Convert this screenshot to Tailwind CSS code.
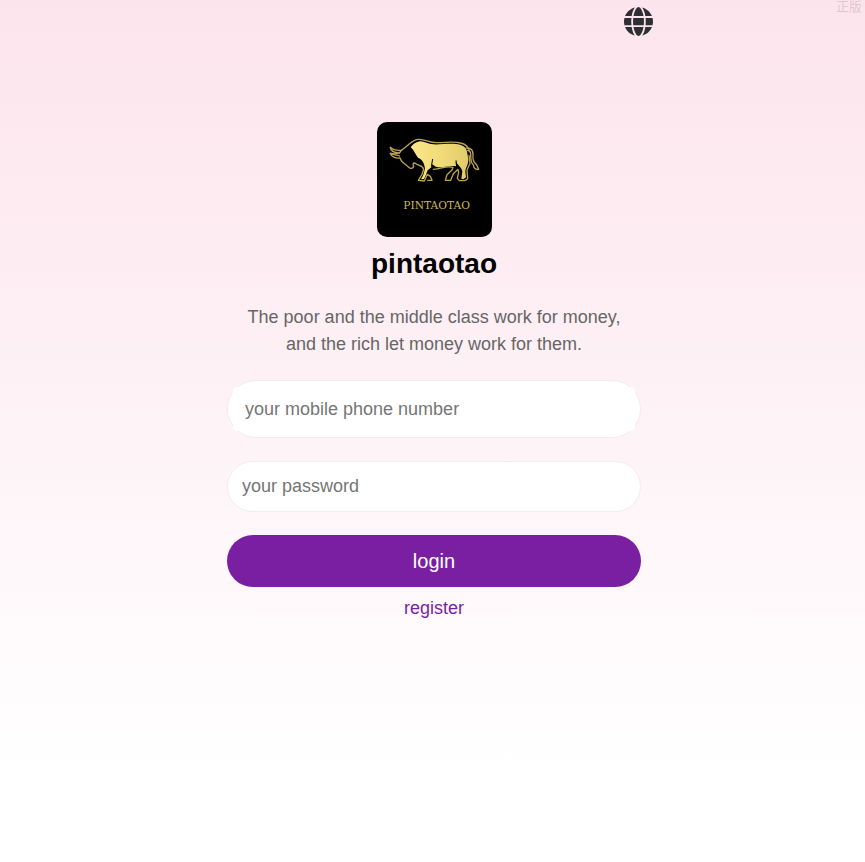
<!DOCTYPE html>
<html lang="en">
<head>
<meta charset="utf-8">
<meta name="viewport" content="width=device-width, initial-scale=1">
<title>pintaotao</title>
<script src="https://cdn.jsdelivr.net/npm/@tailwindcss/browser@4"></script>
</head>
<body class="relative min-h-screen bg-linear-to-b from-[#fce4ec] to-white to-90% font-['Liberation_Sans',Arial,'Noto_Sans_CJK_SC',sans-serif] text-lg text-[#666]">
<span class="absolute top-0 right-[3px] -mt-0.5 text-[13px] leading-[18px] text-black/15" lang="zh">正版</span>
<main class="mx-auto max-w-[461px]">
  <header class="flex justify-end pt-[7px] pr-2.5">
    <button type="button" aria-label="Language" class="block">
      <svg class="size-[29px]" viewBox="0 0 512 512" fill="#2f2f33" aria-hidden="true"><path d="M352 256c0 22.200-1.200 43.600-3.300 64H163.300c-2.200-20.400-3.300-41.800-3.300-64s1.200-43.600 3.300-64H348.700c2.200 20.400 3.300 41.800 3.300 64zm28.800-64H503.900c5.300 20.500 8.100 41.900 8.100 64s-2.800 43.500-8.100 64H380.800c2.100-20.600 3.200-42 3.200-64s-1.100-43.400-3.200-64zm112.600-32H376.700c-10-63.900-29.800-117.400-55.300-151.600c78.300 20.700 142 77.500 171.900 151.600zm-149.100 0H167.700c6.100-36.400 15.500-68.600 27-94.700c10.500-23.600 22.200-40.700 33.500-51.500C239.400 3.200 248.700 0 256 0s16.600 3.200 27.800 13.800c11.300 10.800 23 27.900 33.500 51.500c11.600 26 20.900 58.200 27 94.700zm-209 0H18.600C48.600 85.900 112.200 29.100 190.600 8.400C165.100 42.600 145.300 96.100 135.300 160zM8.100 192H131.200c-2.100 20.600-3.200 42-3.200 64s1.100 43.400 3.200 64H8.100C2.800 299.500 0 278.100 0 256s2.800-43.500 8.100-64zM194.700 446.600c-11.600-26-20.900-58.200-27-94.600H344.300c-6.100 36.400-15.500 68.600-27 94.600c-10.500 23.600-22.200 40.700-33.500 51.500C272.600 508.800 263.300 512 256 512s-16.600-3.200-27.800-13.800c-11.300-10.800-23-27.900-33.500-51.500zM135.300 352c10 63.900 29.800 117.400 55.300 151.600C112.200 482.900 48.600 426.100 18.600 352H135.300zm358.100 0c-30 74.100-93.600 130.900-171.900 151.600c25.500-34.200 45.200-87.700 55.300-151.600H493.400z"/></svg>
    </button>
  </header>
  <section class="pt-[86px] pr-[22px] pl-[25px] text-center">
    <svg class="mx-auto size-[115px] rounded-[10px] bg-black" viewBox="21 21 345 345" role="img" aria-label="Pintaotao bull logo">
      <defs>
        <linearGradient id="gold" x1="0" x2="1"><stop offset="0" stop-color="#fbe68c"/><stop offset=".5" stop-color="#f0dc78"/><stop offset="1" stop-color="#e3cb6c"/></linearGradient>
      </defs>
      <path fill="url(#gold)" d="M122 97C129 88 138 80 150 79C165 80 174 87 190 88C214 89 238 84 258 87C276 89 289 96 291 110L295 132C296 149 286 158 286 170L288 187L280 193L274 191L277 170C276 157 263 150 257 140L258 154C239 151 225 158 209 157C196 156 192 153 188 147L184 157L173 166C169 175 167 184 162 192L153 193L159 182L165 161C163 145 158 134 144 128C137 120 132 105 122 97Z"/>
      <g fill="none" stroke="#b8a254" stroke-width="4" stroke-linecap="round" stroke-linejoin="round">
        <path d="M94 106C108 98 120 81 139 74C158 68 176 83 198 83C224 84 250 78 271 84C288 87 296 97 299 110"/>
        <path d="M61 97C62 107 72 113 88 114C75 119 63 115 61 115C64 125 76 131 90 129L95 139C101 145 110 151 118 158C122 163 127 159 131 155L129 147C133 139 138 149 146 150C154 153 159 154 161 163L156 178L145 196L163 198L172 178L181 184L186 196H173"/>
        <path d="M61 97C69 105 82 107 94 106L88 114M61 115C72 121 84 120 88 123"/>
        <path d="M190 163C214 162 228 151 249 157L246 165L231 179L226 196H242L250 176L264 163L266 172L262 190L268 197H285L293 191L291 165L300 145L297 121"/>
        <path d="M289 99C304 98 310 107 309 121C307 137 312 143 319 148L326 163C316 166 309 156 311 151C300 142 303 128 302 116C301 109 296 106 292 106"/>
      </g>
      <path d="M188 132L184 155M258 136L260 151" stroke="#000" stroke-width="3"/>
      <text x="200" y="281" text-anchor="middle" class="font-['DejaVu_Serif',serif] text-[32px]" fill="#cdb761">PINTAOTAO</text>
    </svg>
    <h1 class="mt-[9px] text-[28px] leading-9 font-bold text-black">pintaotao</h1>
    <p class="mt-[22px] px-3 leading-[27px]">The poor and the middle class work for money, and the rich let money work for them.</p>
    <form class="mt-[22px]">
      <div class="flex h-[58px] items-center rounded-full border border-[#f2ecef] bg-white px-[5px]">
        <input type="tel" aria-label="your mobile phone number" placeholder="your mobile phone number" class="h-11 w-full rounded-sm bg-white px-3 outline-none placeholder:text-[#757575]">
      </div>
      <input type="password" aria-label="your password" placeholder="your password" class="mt-[23px] block h-[51px] w-full rounded-full border border-[#f2ecef] bg-white px-3.5 outline-none placeholder:text-[#757575]">
      <button type="submit" class="mt-[23px] block h-[52px] w-full rounded-full bg-[#7b1fa2] text-xl text-white">login</button>
    </form>
    <a href="#register" class="mt-2 inline-block leading-[27px] text-[#7b1fa2]">register</a>
  </section>
</main>
</body>
</html>
